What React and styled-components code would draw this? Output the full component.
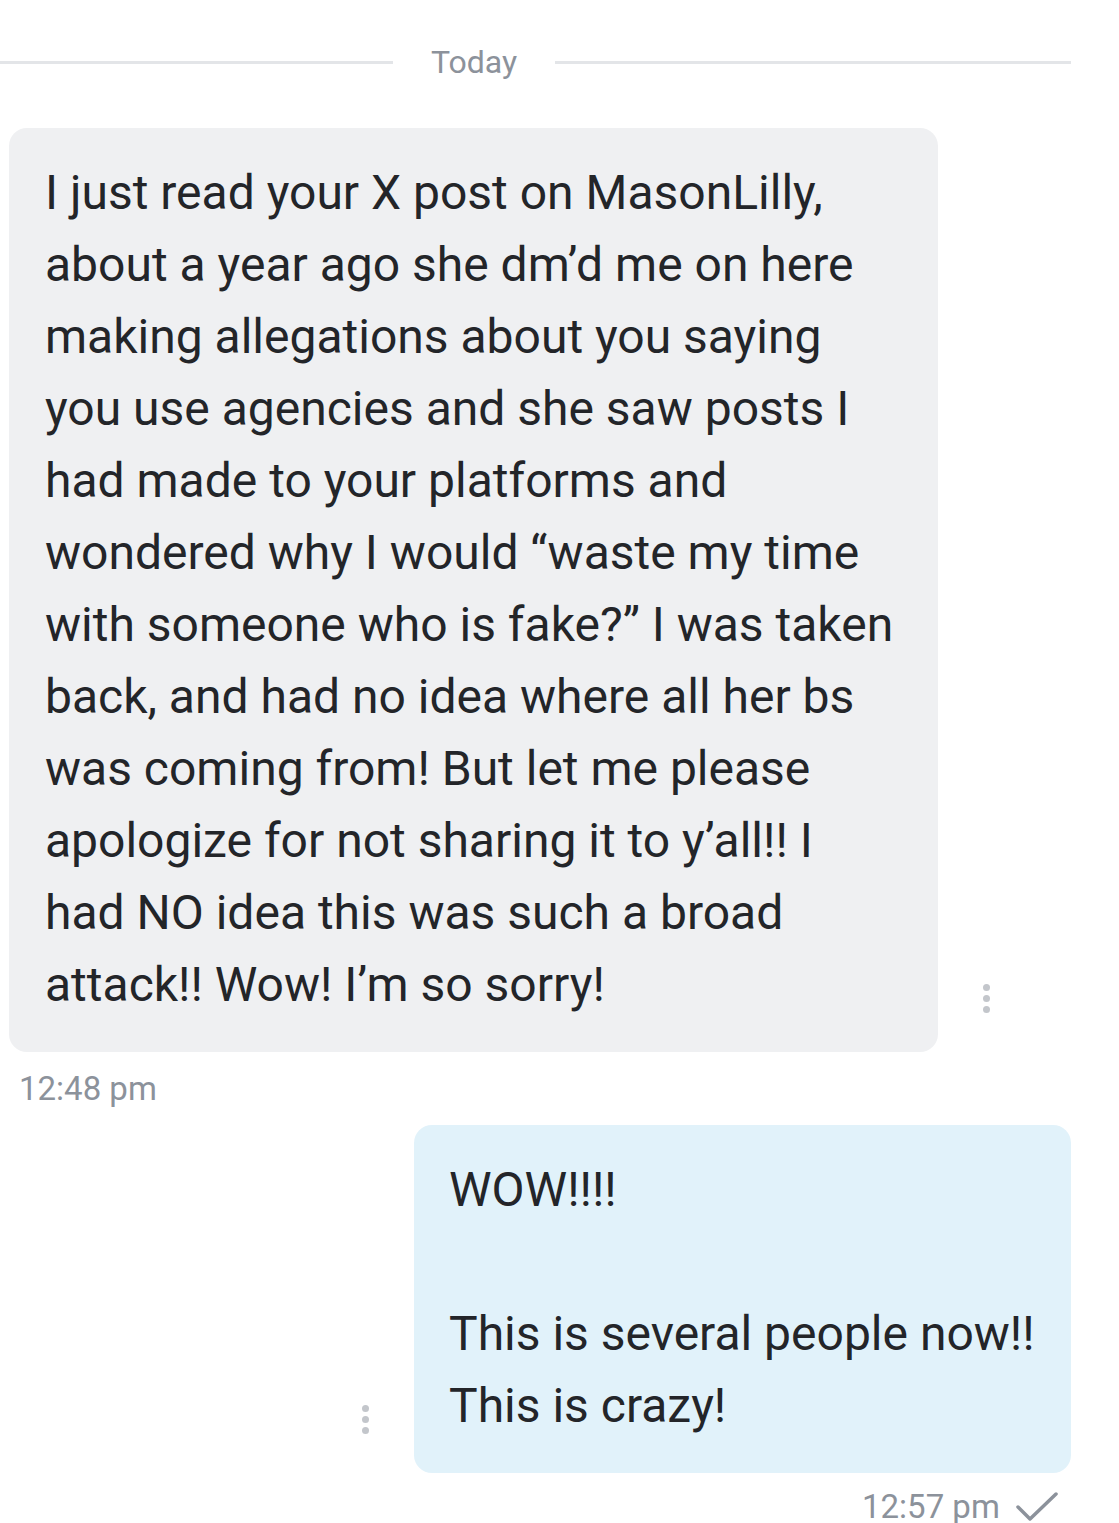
import styled, { createGlobalStyle } from "styled-components";

const GlobalStyle = createGlobalStyle`
  body {
    margin: 0;
    background: #ffffff;
    font-family: Roboto, "Liberation Sans", sans-serif;
  }
`;

const Thread = styled.div`
  width: 1119px;
  height: 1523px;
  overflow: hidden;
  display: flex;
  flex-direction: column;
`;

const Separator = styled.div`
  display: grid;
  grid-template-columns: 393px auto 1fr;
  column-gap: 38px;
  align-items: center;
  width: 1071px;
  margin-top: 42px;
`;

const Rule = styled.div`
  height: 3px;
  background: #e3e5e8;
`;

const DayLabel = styled.span`
  font-size: 32px;
  line-height: 40px;
  color: #8c929b;
`;

const Row = styled.div`
  display: flex;
  align-items: flex-end;
  justify-content: ${(p) => (p.$out ? "flex-end" : "flex-start")};
  width: 1071px;
  margin-top: ${(p) => p.$top}px;
  margin-left: ${(p) => (p.$out ? 0 : 9)}px;
`;

const Bubble = styled.div`
  box-sizing: border-box;
  width: ${(p) => p.$width}px;
  padding: 29px 16px 31px ${(p) => (p.$out ? 35 : 36)}px;
  border-radius: 18px;
  background: ${(p) => (p.$out ? "#e1f2fa" : "#eff0f2")};
  color: #232529;
  font-size: 48px;
  line-height: 72px;
  white-space: pre-wrap;
`;

const Dots = styled.div`
  display: flex;
  flex-direction: column;
  gap: 4px;
  padding-bottom: 39px;
  margin: ${(p) => (p.$out ? "0 45px 0 0" : "0 0 0 45px")};
`;

const Dot = styled.span`
  width: 7px;
  height: 7px;
  border-radius: 50%;
  background: #c3c6cb;
`;

const Stamp = styled.div`
  display: flex;
  align-items: center;
  gap: 16px;
  font-size: 33px;
  line-height: 40px;
  color: #8c929b;
  margin-top: ${(p) => p.$top}px;
  ${(p) =>
    p.$out
      ? "align-self: flex-start; margin-left: 862px;"
      : "margin-left: 19px;"}
`;

const MoreDots = ({ out }) => (
  <Dots $out={out}>
    <Dot />
    <Dot />
    <Dot />
  </Dots>
);

const Check = () => (
  <svg width="42" height="30" viewBox="0 0 42 30" fill="none">
    <path d="M2 15 L14 27 L40 2" stroke="#8c929b" strokeWidth="3.5" strokeLinecap="round" strokeLinejoin="round" />
  </svg>
);

const incoming = `I just read your X post on MasonLilly,
about a year ago she dm’d me on here
making allegations about you saying
you use agencies and she saw posts I
had made to your platforms and
wondered why I would “waste my time
with someone who is fake?” I was taken
back, and had no idea where all her bs
was coming from! But let me please
apologize for not sharing it to y’all!! I
had NO idea this was such a broad
attack!! Wow! I’m so sorry!`;

const outgoing = `WOW!!!!

This is several people now!!
This is crazy!`;

export default function App() {
  return (
    <>
      <GlobalStyle />
      <Thread>
        <Separator>
          <Rule />
          <DayLabel>Today</DayLabel>
          <Rule />
        </Separator>

        <Row $top={46}>
          <Bubble $width={929}>{incoming}</Bubble>
          <MoreDots />
        </Row>
        <Stamp $top={17}>12:48 pm</Stamp>

        <Row $out $top={16}>
          <MoreDots out />
          <Bubble $out $width={657}>{outgoing}</Bubble>
        </Row>
        <Stamp $out $top={14}>
          12:57 pm <Check />
        </Stamp>
      </Thread>
    </>
  );
}
